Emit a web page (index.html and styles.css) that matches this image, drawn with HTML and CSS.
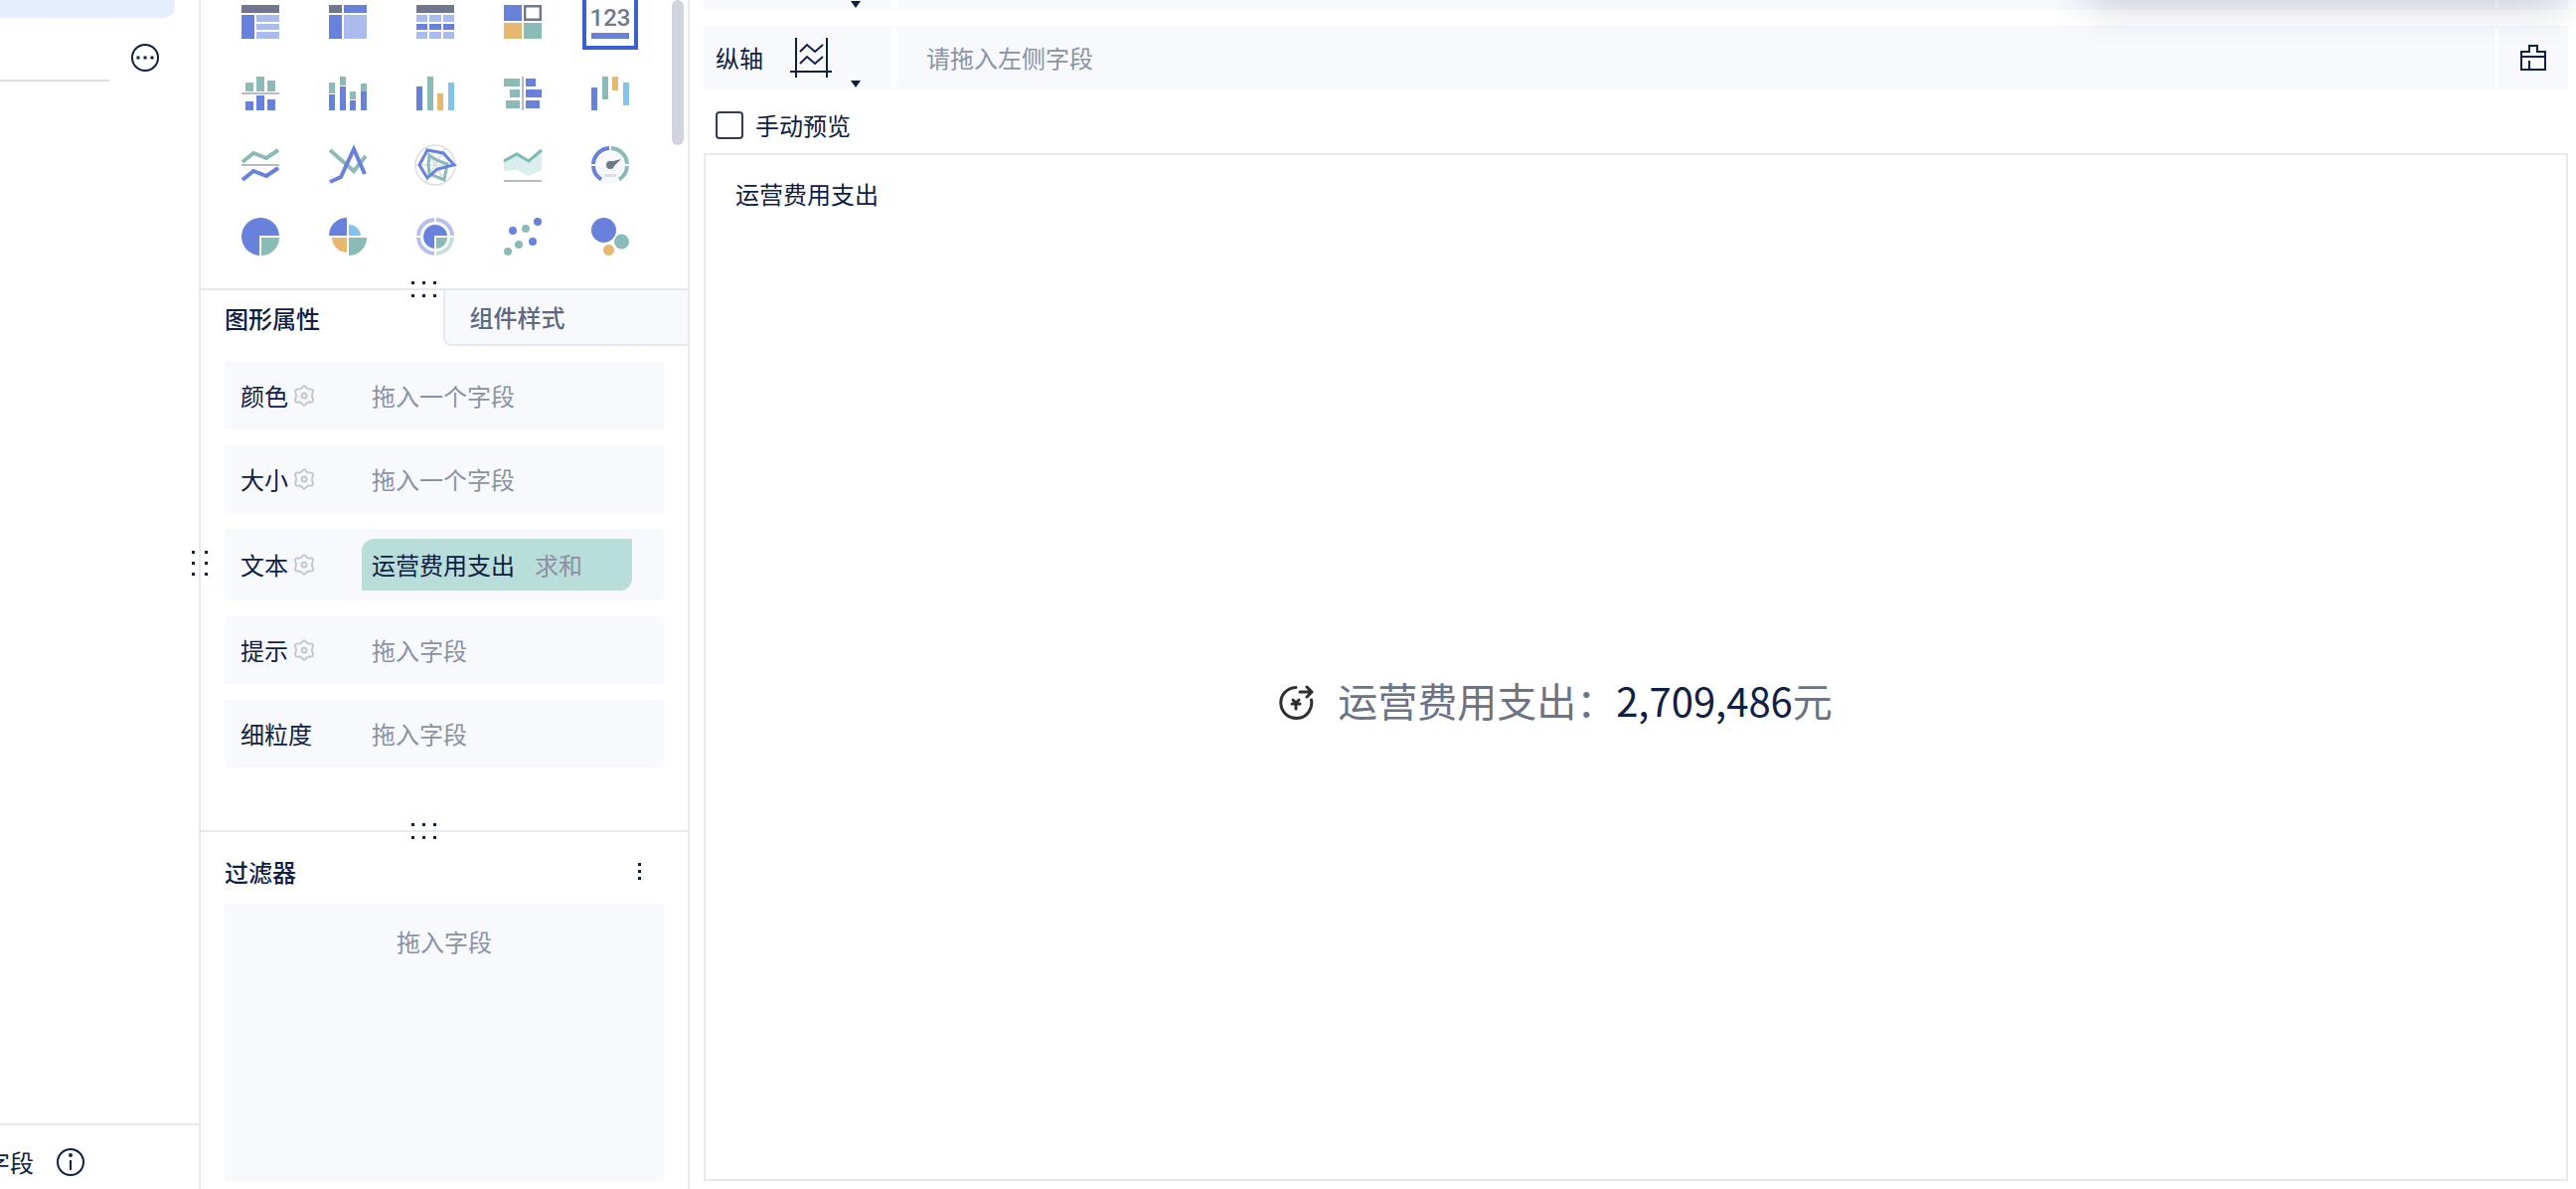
FILE: index.html
```
<!DOCTYPE html>
<html lang="zh-CN">
<head>
  <meta charset="UTF-8">
  <meta name="viewport" content="width=device-width, initial-scale=1.0">
  <title>运营费用支出</title>
  <link rel="stylesheet" href="styles.css">
</head>
<body>
  <div class="editor">

    <!-- field list -->
    <aside class="field-panel">
      <div class="active-table"></div>
      <div class="search-row">
        <input class="search-input" type="text" aria-label="搜索">
        <button class="icon-btn" aria-label="更多">
          <svg width="30" height="30" viewBox="-15 -15 30 30">
            <circle r="13" fill="none" stroke="#0f2045" stroke-width="2"/>
            <path d="M-8.500-1.500h3v3h-3zM-1.500-1.500h3v3h-3zM5.500-1.500h3v3h-3z" fill="#0f2045"/>
          </svg>
        </button>
      </div>
      <div class="field-footer">
        <span>字段</span>
        <button class="icon-btn" aria-label="说明">
          <svg width="30" height="30" viewBox="-15 -15 30 30">
            <circle r="13" fill="none" stroke="#0f2045" stroke-width="2"/>
            <path d="M0-2V8" stroke="#0f2045" stroke-width="2"/>
            <circle cy="-7" r="2" fill="#0f2045"/>
          </svg>
        </button>
      </div>
      <svg class="grip grip-side" width="16" height="26" viewBox="0 0 16 26">
        <path d="M0 0h3v3H0zM13 0h3v3h-3zM0 11h3v3H0zM13 11h3v3h-3zM0 22h3v3H0zM13 22h3v3h-3z" fill="#0f2045"/>
      </svg>
    </aside>

    <!-- chart settings -->
    <section class="setting-panel">
      <div class="chart-types">
        <div class="chart-grid">
          <button class="chart-btn" aria-label="分组表">
            <svg viewBox="-22 -22 44 44">
              <path class="slate" d="M-19-17h38v8h-38z"/>
              <path class="blue" d="M-19-7h13v24h-13z"/>
              <path class="pale" d="M-4-7h23v7h-23zM-4 2h23v6h-23zM-4 10h23v7h-23z"/>
            </svg>
          </button>
          <button class="chart-btn" aria-label="交叉表">
            <svg viewBox="-22 -22 44 44">
              <path class="slate" d="M-19-17h13v8h-13z"/>
              <path class="blue" d="M-4-17h23v8h-23zM-19-7h13v24h-13z"/>
              <path class="pale" d="M-4-7h23v24h-23z"/>
            </svg>
          </button>
          <button class="chart-btn" aria-label="明细表">
            <svg viewBox="-22 -22 44 44">
              <path class="slate" d="M-19-17h38v8h-38z"/>
              <path class="pale" d="M-19-7h11v7h-11zM-6-7h12v7h-12zM8-7h11v7h-11zM-19 10h11v7h-11zM-6 10h12v7h-12zM8 10h11v7h-11z"/>
              <path class="blue" d="M-19 2h11v6h-11zM-6 2h12v6h-12zM8 2h11v6h-11z"/>
            </svg>
          </button>
          <button class="chart-btn" aria-label="颜色表格">
            <svg viewBox="-22 -22 44 44">
              <path class="blue" d="M-19-17h18v16h-18z"/>
              <path class="slate-line" d="M2.200-15.800h15.600v13.600H2.200z"/>
              <path class="orange" d="M-19 1h18v16h-18z"/>
              <path class="green" d="M1 1h18v16H1z"/>
            </svg>
          </button>
          <button class="chart-btn selected" aria-label="KPI指标卡">
            <svg viewBox="-22 -22 44 44">
              <text class="kpi-digits" x="0" y="4" text-anchor="middle">123</text>
              <path class="blue" d="M-19 11h38v6h-38z"/>
            </svg>
          </button>

          <button class="chart-btn" aria-label="对比柱状图">
            <svg viewBox="-22 -22 44 44">
              <path class="green" d="M-15-11h8v9h-8zM-4-17h8v15h-8zM7-13h8v11H7z"/>
              <path class="gray" d="M-19-1h38v2h-38z"/>
              <path class="blue" d="M-15 8h8v9h-8zM-4 2h8v15h-8zM7 6h8v11H7z"/>
            </svg>
          </button>
          <button class="chart-btn" aria-label="堆积柱状图">
            <svg viewBox="-22 -22 44 44">
              <path class="green" d="M-19-11h6v11h-6zM-8-17h6v9h-6zM2-2h6v8H2zM13-10h6v8h-6z"/>
              <path class="blue" d="M-19 1h6v16h-6zM-8-7h6v24h-6zM2 7h6v10H2zM13-2h6v19h-6z"/>
            </svg>
          </button>
          <button class="chart-btn" aria-label="多系列柱状图">
            <svg viewBox="-22 -22 44 44">
              <path class="blue" d="M-19-7h6v24h-6z"/>
              <path class="green" d="M-8-17h6v34h-6z"/>
              <path class="orange" d="M2 0h6v17H2z"/>
              <path class="sky" d="M13-11h6v28h-6z"/>
            </svg>
          </button>
          <button class="chart-btn" aria-label="对比条形图">
            <svg viewBox="-22 -22 44 44">
              <path class="green" d="M-19-15h16v8h-16zM-13-4h10v8h-10zM-17 7h14v8h-14z"/>
              <path class="gray" d="M-1-17h2v34h-2z"/>
              <path class="blue" d="M3-15h10v8H3zM3-4h16v8H3zM3 7h14v8H3z"/>
            </svg>
          </button>
          <button class="chart-btn" aria-label="瀑布图">
            <svg viewBox="-22 -22 44 44">
              <path class="blue" d="M-19-6h6v23h-6z"/>
              <path class="green" d="M-8-17h6V6h-6z"/>
              <path class="orange" d="M2-17h6v14H2z"/>
              <path class="sky" d="M13-11h6v23h-6z"/>
            </svg>
          </button>

          <button class="chart-btn" aria-label="范围面积图">
            <svg viewBox="-22 -22 44 44">
              <path class="green-line" d="M-18-3-7-12 6-7 18-15"/>
              <path class="gray" d="M-19-1h38v2h-38z"/>
              <path class="blue-line" d="M-18 15-7 6 6 11 18 3"/>
            </svg>
          </button>
          <button class="chart-btn" aria-label="折线图">
            <svg viewBox="-22 -22 44 44">
              <path class="green-line" d="M-18-15 6 6 18-9"/>
              <path class="blue-line" d="M-18 17-7 12 6-16 17 9"/>
            </svg>
          </button>
          <button class="chart-btn" aria-label="雷达图">
            <svg viewBox="-22 -22 44 44">
              <circle class="thin-line" r="20"/>
              <circle class="thin-line" r="7"/>
              <path class="thin-line" d="M-20 0h40M-10-17 10 17M10-17-10 17"/>
              <path class="green-line radar-line" d="M-6-10 1-5 12-1 9 15-6 9-7 0z"/>
              <path class="blue-line radar-line" d="M-8-15 8-12 19 0 2 4-8 13-16 0z"/>
            </svg>
          </button>
          <button class="chart-btn" aria-label="面积图">
            <svg viewBox="-22 -22 44 44">
              <path fill="#dceeeb" d="M-19-4-6-11 6-4 19-15V5L6 11-6 5-19 6z"/>
              <path d="M-19-4-6-11 6-4 19-15" fill="none" stroke="#79bdb4" stroke-width="3"/>
              <path class="gray" d="M-19 15h38v2h-38z"/>
            </svg>
          </button>
          <button class="chart-btn" aria-label="仪表盘">
            <svg viewBox="-22 -22 44 44">
              <circle r="19" fill="#f7f8fb"/>
              <path class="blue-line" d="M-1-17A17 17 0 0 0-17-1M-17 1A17 17 0 0 0-9 14.500"/>
              <path class="green-line" d="M1-17A17 17 0 0 1 17-1M17 1A17 17 0 0 1 9 14.500"/>
              <circle class="slate" r="4"/>
              <path class="slate" d="M-1-3 11-6 2 3z"/>
              <rect x="-6" y="9" width="12" height="3" rx="1" fill="#dcdee5"/>
            </svg>
          </button>

          <button class="chart-btn" aria-label="饼图">
            <svg viewBox="-22 -22 44 44">
              <path class="blue" d="M-1 0V19A19 19 0 1 1 19-1H-1z"/>
              <path class="green" d="M1 1h18A18 18 0 0 1 1 19z"/>
            </svg>
          </button>
          <button class="chart-btn" aria-label="玫瑰图">
            <svg viewBox="-22 -22 44 44">
              <path class="blue" d="M-1-1h-18A18 18 0 0 1-1-19z"/>
              <path class="sky" d="M1-1V-12A12 12 0 0 1 13-1z"/>
              <path class="green" d="M1 1h18A18 18 0 0 1 1 19z"/>
              <path class="orange" d="M-1 1V16A15 15 0 0 1-16 1z"/>
            </svg>
          </button>
          <button class="chart-btn" aria-label="多层饼图">
            <svg viewBox="-22 -22 44 44">
              <path class="blue" d="M-1 0V12A12 12 0 1 1 12-1H-1z"/>
              <path class="green" d="M1 1h11A11 11 0 0 1 1 12z"/>
              <path d="M-1-17A17 17 0 0 0-17-1M-17 1A17 17 0 0 0-1 17M1-17A17 17 0 0 1 17-1" fill="none" stroke="#b4c0ed" stroke-width="4"/>
              <path d="M17 1A17 17 0 0 1 1 17" fill="none" stroke="#c5deda" stroke-width="4"/>
            </svg>
          </button>
          <button class="chart-btn" aria-label="散点图">
            <svg viewBox="-22 -22 44 44">
              <g class="blue"><circle cx="-10" cy="-6" r="4"/><circle cx="15" cy="-15" r="4"/><circle cx="10" cy="5" r="4"/></g>
              <g class="green"><circle cx="3" cy="-8" r="4"/><circle cx="-4" cy="8" r="4"/><circle cx="-15" cy="15" r="4"/></g>
            </svg>
          </button>
          <button class="chart-btn" aria-label="聚合气泡图">
            <svg viewBox="-22 -22 44 44">
              <circle class="blue" cx="-6.500" cy="-6.500" r="12.500"/>
              <circle class="green" cx="11.500" cy="5" r="7.500"/>
              <circle class="orange" cx="-1.500" cy="13.500" r="5.500"/>
            </svg>
          </button>
        </div>
        <div class="scroll-thumb"></div>
      </div>

      <div class="attr-section">
        <svg class="grip grip-top" width="26" height="16" viewBox="0 0 26 16">
          <path d="M0 0h3v3H0zM11 0h3v3h-3zM22 0h3v3h-3zM0 13h3v3H0zM11 13h3v3h-3zM22 13h3v3h-3z" fill="#0f2045"/>
        </svg>
        <div class="tabs">
          <button class="tab active">图形属性</button>
          <button class="tab">组件样式</button>
        </div>
        <div class="attr-list">
          <div class="attr-row">
            <div class="attr-name">颜色
              <svg class="gear" viewBox="-11 -11 22 22"><path d="M-2.500-7.500Q0-12 2.500-7.500Q4-6.500 5.500-6.500Q10.500-7 8.500-2.500Q7 0 8.500 2.500Q10.500 7 5.500 6.500Q4 6.500 2.500 7.500Q0 12-2.500 7.500Q-4 6.500-5.500 6.500Q-10.500 7-8.500 2.500Q-7 0-8.500-2.500Q-10.500-7-5.500-6.500Q-4-6.500-2.500-7.500z"/><circle r="2.500"/></svg>
            </div>
            <div class="attr-drop">拖入一个字段</div>
          </div>
          <div class="attr-row">
            <div class="attr-name">大小
              <svg class="gear" viewBox="-11 -11 22 22"><path d="M-2.500-7.500Q0-12 2.500-7.500Q4-6.500 5.500-6.500Q10.500-7 8.500-2.500Q7 0 8.500 2.500Q10.500 7 5.500 6.500Q4 6.500 2.500 7.500Q0 12-2.500 7.500Q-4 6.500-5.500 6.500Q-10.500 7-8.500 2.500Q-7 0-8.500-2.500Q-10.500-7-5.500-6.500Q-4-6.500-2.500-7.500z"/><circle r="2.500"/></svg>
            </div>
            <div class="attr-drop">拖入一个字段</div>
          </div>
          <div class="attr-row">
            <div class="attr-name">文本
              <svg class="gear" viewBox="-11 -11 22 22"><path d="M-2.500-7.500Q0-12 2.500-7.500Q4-6.500 5.500-6.500Q10.500-7 8.500-2.500Q7 0 8.500 2.500Q10.500 7 5.500 6.500Q4 6.500 2.500 7.500Q0 12-2.500 7.500Q-4 6.500-5.500 6.500Q-10.500 7-8.500 2.500Q-7 0-8.500-2.500Q-10.500-7-5.500-6.500Q-4-6.500-2.500-7.500z"/><circle r="2.500"/></svg>
            </div>
            <div class="attr-drop">
              <div class="field-tag">运营费用支出 <span class="field-calc">求和</span></div>
            </div>
          </div>
          <div class="attr-row">
            <div class="attr-name">提示
              <svg class="gear" viewBox="-11 -11 22 22"><path d="M-2.500-7.500Q0-12 2.500-7.500Q4-6.500 5.500-6.500Q10.500-7 8.500-2.500Q7 0 8.500 2.500Q10.500 7 5.500 6.500Q4 6.500 2.500 7.500Q0 12-2.500 7.500Q-4 6.500-5.500 6.500Q-10.500 7-8.500 2.500Q-7 0-8.500-2.500Q-10.500-7-5.500-6.500Q-4-6.500-2.500-7.500z"/><circle r="2.500"/></svg>
            </div>
            <div class="attr-drop">拖入字段</div>
          </div>
          <div class="attr-row">
            <div class="attr-name">细粒度</div>
            <div class="attr-drop">拖入字段</div>
          </div>
        </div>
      </div>

      <div class="filter-section">
        <svg class="grip grip-top" width="26" height="16" viewBox="0 0 26 16">
          <path d="M0 0h3v3H0zM11 0h3v3h-3zM22 0h3v3h-3zM0 13h3v3H0zM11 13h3v3h-3zM22 13h3v3h-3z" fill="#0f2045"/>
        </svg>
        <div class="filter-header">
          <h2 class="filter-title">过滤器</h2>
          <button class="icon-btn" aria-label="过滤器菜单">
            <svg width="48" height="30" viewBox="-24 -15 48 30"><path d="M-2-9h3v3h-3zM-2-2h3v3h-3zM-2 5h3v3h-3z" fill="#0f2045"/></svg>
          </button>
        </div>
        <div class="filter-drop">拖入字段</div>
      </div>
    </section>

    <!-- preview -->
    <main class="preview-panel">
      <div class="axis-row">
        <div class="axis-name">
          <button class="axis-btn" aria-label="横轴设置"><span class="caret"></span></button>
        </div>
        <div class="axis-drop"></div>
        <div class="axis-clear"></div>
      </div>
      <div class="axis-row">
        <div class="axis-name">纵轴
          <button class="axis-btn" aria-label="纵轴设置">
            <svg width="42" height="40" viewBox="0 0 42 40" fill="none" stroke="#0f2045">
              <path d="M6 0v40M37 0v40M0 34h42" stroke-width="2"/>
              <path d="M10 14 17 7 25 14 33 7M10 26 17 19 25 26 33 19" stroke-width="2"/>
            </svg>
            <span class="caret"></span>
          </button>
        </div>
        <div class="axis-drop">请拖入左侧字段</div>
        <button class="axis-clear" aria-label="清空">
          <svg width="26" height="26" viewBox="0 0 26 26" fill="none" stroke="#0f2045" stroke-width="2">
            <path d="M1 7h8V1h8v6h8v18H1zM1 12h24M9 16v9"/>
          </svg>
        </button>
      </div>

      <div class="preview-option">
        <input type="checkbox" id="manual-preview">
        <label for="manual-preview">手动预览</label>
      </div>

      <div class="canvas">
        <h1 class="canvas-title">运营费用支出</h1>
        <div class="kpi">
          <svg class="kpi-icon" width="36" height="36" viewBox="-18 -18 36 36" fill="none" stroke="#2f2f2f" stroke-width="3" stroke-linecap="round" stroke-linejoin="round">
            <path d="M0-15.500A15.500 15.500 0 1 0 15.500-3"/>
            <path d="M4-11H16M11-16 16-11 11-6"/>
            <path d="M-3-3 0 0 3-3M0 0V6M-4 1H4" stroke-width="3"/>
          </svg>
          <span class="kpi-name">运营费用支出：</span><span class="kpi-value">2,709,486</span><span class="kpi-name">元</span>
        </div>
      </div>
    </main>

    <div class="top-popup"></div>
  </div>
</body>
</html>
```

FILE: styles.css
```
* {
  box-sizing: border-box;
}

body {
  margin: 0;
  background-color: #fff;
  color: #0f2045;
  font-family: "Noto Sans CJK SC", sans-serif;
  font-size: 24px;
  line-height: 36px;
}

button {
  padding: 0;
  border: none;
  background: none;
  color: inherit;
  font: inherit;
  cursor: pointer;
}

svg {
  display: block;
}

.editor {
  position: relative;
  display: flex;
  height: 100vh;
  overflow: hidden;
}

.icon-btn {
  flex: none;
}

.grip {
  position: absolute;
  z-index: 1;
}

/* field list */
.field-panel {
  position: relative;
  flex: none;
  display: flex;
  flex-direction: column;
  width: 202px;
  border-right: 2px solid #e8e9ef;
}

.active-table {
  width: 176px;
  height: 18px;
  background-color: #e6edfe;
  border-bottom-right-radius: 12px;
}

.search-row {
  display: flex;
  align-items: center;
  gap: 21px;
  padding-top: 16px;
}

.search-input {
  width: 110px;
  height: 48px;
  border: none;
  border-bottom: 2px solid #dddee4;
  background: none;
  font: inherit;
  outline: none;
}

.field-footer {
  display: flex;
  align-items: center;
  gap: 22px;
  height: 66px;
  margin-top: auto;
  padding-top: 10px;
  border-top: 2px solid #e8e9ef;
}

.field-footer span {
  margin-left: -14px;
}

.grip-side {
  top: 554px;
  right: -9px;
}

/* chart settings */
.setting-panel {
  flex: none;
  display: flex;
  flex-direction: column;
  width: 492px;
  border-right: 2px solid #e8e9ef;
}

.chart-types {
  position: relative;
  height: 290px;
  overflow: hidden;
}

.chart-grid {
  display: grid;
  grid-template-columns: repeat(5, 56px);
  gap: 16px 32px;
  margin-top: -6px;
  padding-left: 32px;
}

.chart-btn {
  display: flex;
  align-items: center;
  justify-content: center;
  height: 56px;
}

.chart-btn.selected {
  border: 4px solid #3a5fd4;
}

.chart-btn svg {
  flex: none;
  width: 44px;
  height: 44px;
}

.blue { fill: #6881dd; }
.pale { fill: #abbbee; }
.green { fill: #8abbb6; }
.orange { fill: #e7b86f; }
.sky { fill: #85c1ed; }
.slate { fill: #6f788c; }
.gray { fill: #b4bac6; }

.slate-line {
  fill: none;
  stroke: #6f788c;
  stroke-width: 2.4;
}

.green-line {
  fill: none;
  stroke: #8abbb6;
  stroke-width: 4;
}

.blue-line {
  fill: none;
  stroke: #6881dd;
  stroke-width: 4;
}

.radar-line {
  stroke-width: 3;
}

.thin-line {
  fill: none;
  stroke: #dddfe6;
  stroke-width: 1.5;
}

.kpi-digits {
  fill: #6f788c;
  font-family: Roboto, sans-serif;
  font-size: 24px;
  font-weight: 500;
}

.scroll-thumb {
  position: absolute;
  top: 0;
  right: 4px;
  width: 12px;
  height: 146px;
  background-color: #d1d4dc;
  border-radius: 6px;
}

.attr-section {
  position: relative;
  height: 545px;
  border-top: 2px solid #e8e9ef;
}

.grip-top {
  top: -9px;
  left: 212px;
}

.tabs {
  display: flex;
}

.tab {
  flex: 1;
  height: 56px;
  padding-left: 25px;
  background-color: #f7f9fd;
  border-left: 2px solid #e8e9ef;
  border-bottom: 2px solid #e8e9ef;
  border-bottom-left-radius: 8px;
  color: #5e6880;
  font-weight: 500;
  text-align: left;
}

.tab.active {
  padding-left: 24px;
  background-color: #fff;
  border: none;
  color: #0f2045;
}

.attr-list {
  display: flex;
  flex-direction: column;
  gap: 16px;
  padding: 16px 24px;
}

.attr-row {
  display: flex;
  align-items: center;
  min-height: 68px;
  padding: 10px 32px 10px 16px;
  background-color: #f8f9fd;
}

.attr-name {
  flex: none;
  display: flex;
  align-items: center;
  gap: 5px;
  width: 122px;
}

.gear {
  width: 22px;
  height: 22px;
  fill: none;
  stroke: #c3c7d1;
  stroke-width: 2;
}

.attr-drop {
  flex: 1;
  text-indent: 10px;
  color: #8a93a6;
}

.field-tag {
  display: flex;
  align-items: center;
  gap: 10px;
  height: 52px;
  background-color: #b9ddd9;
  border-radius: 12px 0;
  color: #0f2045;
}

.field-calc {
  color: #8b90a2;
}

.filter-section {
  position: relative;
  flex: 1;
  display: flex;
  flex-direction: column;
  padding: 0 24px 8px;
  border-top: 2px solid #e8e9ef;
}

.filter-header {
  display: flex;
  align-items: center;
  justify-content: space-between;
  height: 72px;
  padding-top: 8px;
}

.filter-title {
  margin: 0;
  font-size: 24px;
  font-weight: 500;
}

.filter-drop {
  flex: 1;
  padding-top: 20px;
  background-color: #f8f9fd;
  color: #8a93a6;
  text-align: center;
}

/* preview */
.preview-panel {
  flex: 1;
  display: flex;
  flex-direction: column;
  margin-top: -54px;
  padding: 0 8px 8px 14px;
}

.axis-row {
  flex: none;
  display: flex;
  height: 64px;
  margin-bottom: 16px;
  background-color: #f8f9fd;
}

.axis-name {
  display: flex;
  align-items: center;
  width: 190px;
  padding-left: 12px;
}

.axis-btn {
  position: relative;
  display: flex;
  align-items: center;
  width: 103px;
  height: 64px;
  margin-left: auto;
}

.caret {
  position: absolute;
  right: 32px;
  bottom: 2px;
  border: 5px solid transparent;
  border-top: 7px solid #0f2045;
  border-bottom: none;
}

.axis-drop {
  flex: 1;
  margin: 2px 0;
  padding: 12px 30px;
  border-left: 4px solid #fff;
  border-right: 4px solid #fff;
  color: #8a93a6;
}

.axis-clear {
  display: flex;
  align-items: center;
  justify-content: center;
  width: 70px;
}

.preview-option {
  display: flex;
  align-items: center;
  gap: 12px;
  height: 56px;
  margin-top: -8px;
  padding: 0 12px;
}

.preview-option input {
  appearance: none;
  width: 28px;
  height: 28px;
  margin: 0;
  border: 2px solid #333c50;
  border-radius: 4px;
  background-color: #fff;
}

.canvas {
  flex: 1;
  display: flex;
  flex-direction: column;
  border: 2px solid #e8e9ef;
}

.canvas-title {
  margin: 0;
  padding: 21px 30px 13px;
  font-size: 24px;
  font-weight: 400;
}

.kpi {
  flex: 1;
  display: flex;
  align-items: center;
  justify-content: center;
  padding: 0 162px 4px 0;
  font-size: 40px;
  line-height: 60px;
}

.kpi-icon {
  margin: 6px 24px 0 0;
}

.kpi-name {
  color: #6b7385;
}

/* menu hanging from the top toolbar, only its shadow reaches the page */
.top-popup {
  position: absolute;
  top: -100px;
  right: 12px;
  width: 480px;
  height: 98px;
  box-shadow: 0 8px 40px rgba(15, 25, 50, 0.2);
  pointer-events: none;
}
```
